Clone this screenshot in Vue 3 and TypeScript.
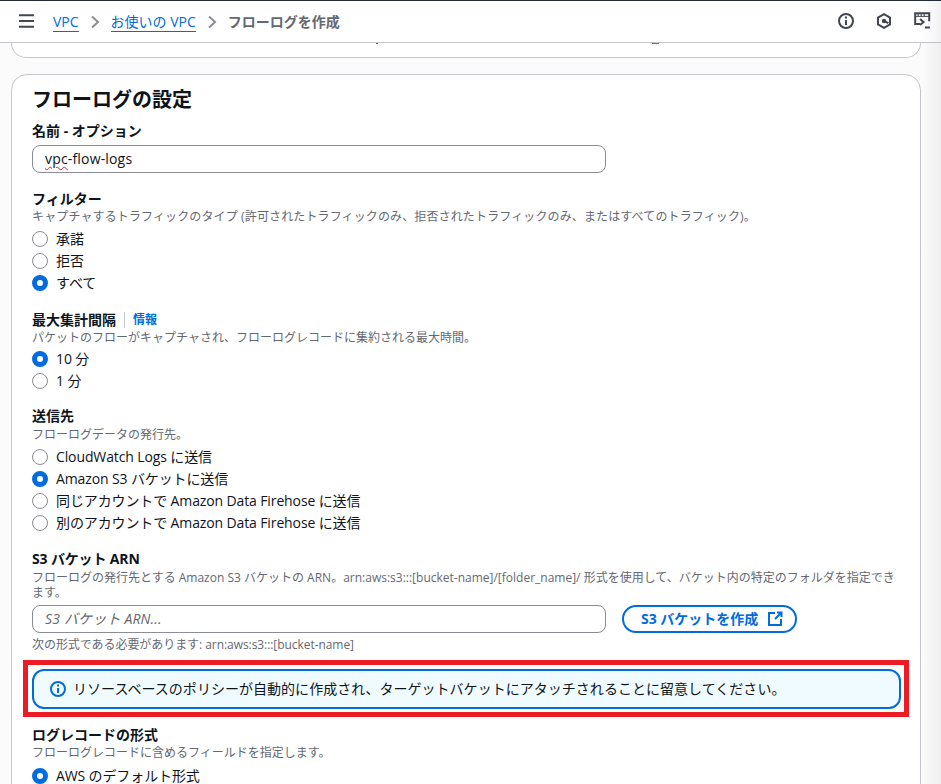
<script setup lang="ts">
interface Option { label: string; checked?: boolean }
const filterOptions: Option[] = [{ label: '承諾' }, { label: '拒否' }, { label: 'すべて', checked: true }]
const intervalOptions: Option[] = [{ label: '10 分', checked: true }, { label: '1 分' }]
const destinationOptions: Option[] = [
  { label: 'CloudWatch Logs に送信' },
  { label: 'Amazon S3 バケットに送信', checked: true },
  { label: '同じアカウントで Amazon Data Firehose に送信' },
  { label: '別のアカウントで Amazon Data Firehose に送信' }
]
</script>

<template>
  <div class="page">
    <header class="topbar">
      <svg class="menu" width="15" height="14" viewBox="0 0 15 14"><path d="M0 1.2h15M0 7h15M0 12.8h15" stroke="#424650" stroke-width="2" fill="none" /></svg>
      <nav class="crumbs">
        <a class="crumb">VPC</a>
        <svg class="chev" width="14" height="16" viewBox="0 0 14 16"><path d="M4 2.5l6 5.5-6 5.5" stroke="#8c8c94" stroke-width="2" fill="none" /></svg>
        <a class="crumb">お使いの VPC</a>
        <svg class="chev" width="14" height="16" viewBox="0 0 14 16"><path d="M4 2.5l6 5.5-6 5.5" stroke="#8c8c94" stroke-width="2" fill="none" /></svg>
        <span class="current">フローログを作成</span>
      </nav>
      <div class="tools">
        <svg width="16" height="16" viewBox="0 0 16 16" fill="none" stroke="#424650" stroke-width="2"><circle cx="8" cy="8" r="7" /><path d="M8 7v5M8 3.5v2" /></svg>
        <svg width="16" height="16" viewBox="0 0 16 16" fill="none" stroke="#424650" stroke-width="2"><path d="M8 1.2l6 3.4v6.8l-6 3.4-6-3.4V4.6z" /><circle cx="8" cy="8" r="2.2" fill="#424650" stroke="none" /><path d="M8 8l4.4 2.2" /></svg>
        <svg width="17" height="17" viewBox="0 0 17 17" fill="none" stroke="#424650" stroke-width="2"><path d="M6 12H1.2V1.2h14v8" /><path d="M1 4.4h14.5" stroke-width="1" /><path d="M3.5 3h1.5M6.5 3H8M9.5 3H11" stroke-width="1.5" /><path d="M6 7l3.5 3L6 13" /><path d="M11 15.5h5" /></svg>
      </div>
    </header>

    <main class="content">
      <div class="card stub"><span class="mark a"></span><span class="mark b"></span></div>
      <section class="card settings">
        <h2 class="title">フローログの設定</h2>

        <div class="field name-field">
          <div class="label">名前 - オプション</div>
          <div class="input"><span class="misspelt">vpc</span>-flow-logs</div>
        </div>

        <div class="field filter-field">
          <div class="label">フィルター</div>
          <div class="desc filter-desc">キャプチャするトラフィックのタイプ (許可されたトラフィックのみ、拒否されたトラフィックのみ、またはすべてのトラフィック)。</div>
          <div class="radios">
            <div v-for="o in filterOptions" :key="o.label" class="radio" :class="{ on: o.checked }"><i></i>{{ o.label }}</div>
          </div>
        </div>

        <div class="field interval-field">
          <div class="label">最大集計間隔<span class="divider"></span><a class="info">情報</a></div>
          <div class="desc">パケットのフローがキャプチャされ、フローログレコードに集約される最大時間。</div>
          <div class="radios">
            <div v-for="o in intervalOptions" :key="o.label" class="radio" :class="{ on: o.checked }"><i></i>{{ o.label }}</div>
          </div>
        </div>

        <div class="field destination-field">
          <div class="label">送信先</div>
          <div class="desc">フローログデータの発行先。</div>
          <div class="radios">
            <div v-for="o in destinationOptions" :key="o.label" class="radio" :class="{ on: o.checked }"><i></i>{{ o.label }}</div>
          </div>
        </div>

        <div class="field">
          <div class="label tight">S3 バケット ARN</div>
          <div class="desc wrap">フローログの発行先とする Amazon S3 バケットの ARN。arn:aws:s3:::[bucket-name]/[folder_name]/ 形式を使用して、バケット内の特定のフォルダを指定できます。</div>
          <div class="input-row">
            <div class="input placeholder">S3 バケット ARN...</div>
            <button class="btn">S3 バケットを作成
              <svg width="16" height="16" viewBox="0 0 16 16" fill="none" stroke="#006ce0" stroke-width="2"><path d="M8 2H2v12h12V8" /><path d="M10 1.5h4.5V6M14 2L8 8" /></svg>
            </button>
          </div>
          <div class="desc hint">次の形式である必要があります: arn:aws:s3:::[bucket-name]</div>
        </div>

        <div class="highlight">
          <div class="alert">
            <svg width="16" height="16" viewBox="0 0 16 16" fill="none" stroke="#006ce0" stroke-width="2"><circle cx="8" cy="8" r="7" /><path d="M8 7v5M8 3.5v2" /></svg>
            <span>リソースベースのポリシーが自動的に作成され、ターゲットバケットにアタッチされることに留意してください。</span>
          </div>
        </div>

        <div class="field last">
          <div class="label">ログレコードの形式</div>
          <div class="desc">フローログレコードに含めるフィールドを指定します。</div>
          <div class="radios">
            <div class="radio on"><i></i>AWS のデフォルト形式</div>
          </div>
        </div>
      </section>
    </main>
    <div class="edge"></div>
  </div>
</template>

<style>
html, body { margin: 0; overflow: hidden; }
</style>

<style scoped>
.page {
  position: relative;
  width: 941px;
  height: 784px;
  overflow: hidden;
  background: #fbfbfb;
  color: #0f141a;
  font-family: "Open Sans", "Noto Sans CJK JP", sans-serif;
  font-size: 14px;
  line-height: 20px;
}
.topbar {
  display: flex;
  align-items: center;
  height: 43px;
  box-sizing: border-box;
  padding: 0 10px 0 19px;
  background: #fff;
  border-top: 1px solid #232b37;
  border-bottom: 1px solid #c6c6cd;
}
.menu { margin-right: 19px; margin-top: -2px; }
.crumbs { display: flex; align-items: center; gap: 9px; }
.crumb { color: #006ce0; border-bottom: 1px solid #006ce0; line-height: 19px; }
.current { color: #656871; font-weight: 700; }
.tools {
  margin-left: auto;
  margin-top: -2px;
  display: flex;
  align-items: center;
  gap: 22px;
}
.content { padding: 0 20px 0 11px; }
.card {
  background: #fff;
  border: 1px solid #c6c6cd;
  border-radius: 16px;
  box-sizing: border-box;
}
.stub {
  display: flex;
  align-items: flex-start;
  height: 15px;
  border-top: 0;
  border-radius: 0 0 16px 16px;
}
.mark { height: 1px; }
.mark.a { width: 2px; margin-left: 364px; background: #4a5a80; }
.mark.b { width: 7px; margin-left: 274px; background: #3d8a68; }
.settings {
  margin-top: 16px;
  padding: 13px 20px 0;
  height: 800px;
}
.title { margin: 0 0 9px; font-size: 20px; line-height: 24px; font-weight: 700; }
.field { margin-bottom: 16px; }
.name-field { margin-bottom: 16px; }
.filter-field { margin-bottom: 17px; }
.interval-field { margin-bottom: 15px; }
.interval-field .radios { margin-top: 3px; }
.destination-field .desc { padding-top: 1px; }
.label { font-weight: 700; font-size: 14px; line-height: 20px; display: flex; align-items: center; }
.tight { letter-spacing: -0.15px; }
.divider { width: 1px; height: 16px; background: #c6c6cd; margin: 0 8px; }
.info { color: #006ce0; font-size: 12px; font-weight: 700; }
.desc { color: #656871; font-size: 12px; line-height: 16px; }
.filter-desc { letter-spacing: 0.13px; }
.wrap { line-height: 15px; padding-top: 1px; }
.hint { margin-top: 4px; letter-spacing: -0.06px; }
.radios { display: flex; flex-direction: column; gap: 2px; margin-top: 4px; }
.last .radios { margin-top: 5px; }
.radio { display: flex; align-items: center; gap: 8px; height: 20px; letter-spacing: -0.12px; }
.radio i {
  width: 16px;
  height: 16px;
  flex: none;
  box-sizing: border-box;
  border: 1px solid #8c8c94;
  border-radius: 50%;
  background: #fff;
}
.radio.on i { border: 5px solid #006ce0; }
.input {
  box-sizing: border-box;
  width: 574px;
  height: 28px;
  padding: 3px 12px;
  margin-top: 4px;
  background: #fff;
  border: 1px solid #8c8c94;
  border-radius: 8px;
  line-height: 20px;
  letter-spacing: 0.17px;
}
.misspelt { text-decoration: underline wavy #e0202a 1px; text-underline-offset: 2px; }
.placeholder { color: #656871; font-style: italic; margin-top: 0; }
.input-row { display: flex; align-items: center; gap: 16px; margin-top: 5px; }
.btn {
  display: flex;
  align-items: center;
  gap: 9px;
  height: 28px;
  box-sizing: border-box;
  padding: 0 12px 0 17px;
  background: #fff;
  border: 2px solid #006ce0;
  border-radius: 20px;
  color: #006ce0;
  font: inherit;
  font-weight: 700;
}
.highlight {
  margin: -9px -9px 8px -9px;
  padding: 4px 3px 3px 4px;
  border: 5px solid #ed1c24;
  background: #fff;
}
.alert {
  display: flex;
  align-items: center;
  gap: 7px;
  height: 40px;
  box-sizing: border-box;
  padding: 0 16px;
  background: #f0fbff;
  border: 2px solid #006ce0;
  border-radius: 12px;
  letter-spacing: 0.03px;
}
.edge {
  position: absolute;
  top: 0;
  right: 0;
  bottom: 0;
  width: 19px;
  background: linear-gradient(to right, rgba(0,0,0,0), rgba(0,0,0,0.05));
}
</style>
